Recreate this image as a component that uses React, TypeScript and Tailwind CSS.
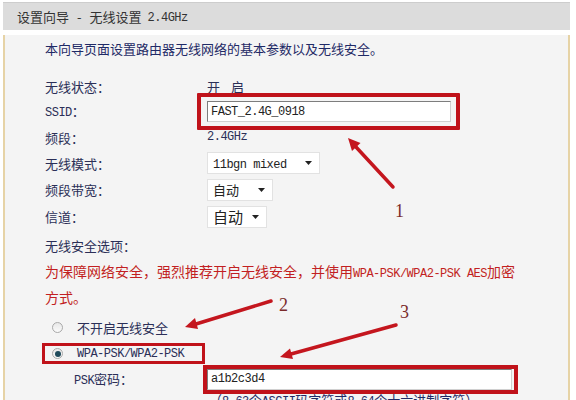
import React from 'react'

const M = ({ children }: { children: React.ReactNode }) => (
  <span className="font-['Liberation_Mono',monospace] text-[12px] tracking-[-0.5px]">{children}</span>
)

function Caret() {
  return (
    <svg width="7" height="4" viewBox="0 0 7 4" className="ml-auto">
      <path d="M0 0h7L3.5 4z" fill="#222" />
    </svg>
  )
}

function Select({ value, w, big }: { value: React.ReactNode; w: string; big?: boolean }) {
  return (
    <div className={`${w} h-[22px] flex items-center bg-white border border-[#e2e2e2] px-[5px] pr-[7px] ${big ? 'text-[15px]' : 'text-[13px]'} text-[#222]`}>
      <span>{value}</span>
      <Caret />
    </div>
  )
}

function Radio({ on }: { on?: boolean }) {
  return (
    <span className="w-[11px] h-[11px] rounded-full border border-[#a9a9a9] bg-gradient-to-b from-[#e8e8e8] to-[#fafafa] grid place-items-center">
      {on && <span className="w-[6px] h-[6px] rounded-full bg-[#1f4b5c]" />}
    </span>
  )
}

function Row({ h, label, children }: { h: string; label: React.ReactNode; children?: React.ReactNode }) {
  return (
    <div className={`${h} flex items-center`}>
      <div className="w-[162px] text-[13px] text-[#2b2f57]">{label}</div>
      <div className="flex items-center text-[13px] text-[#2b2f57]">{children}</div>
    </div>
  )
}

export default function App() {
  return (
    <div className="relative w-[576px] h-[400px] overflow-hidden bg-white pt-[2px] px-[3px] font-['Noto_Sans_CJK_SC','Noto_Sans',sans-serif] leading-none">
      <div className="h-[28px] bg-[#dcdcdc] border-t border-[#cdcdcd] flex items-center pl-[14px] text-[13px] text-[#333] w-[567px]">
        设置向导 <span className="mx-[8px]">-</span> 无线设置 <span className="ml-[6px]"><M>2.4GHz</M></span>
      </div>
      <div className="h-[372px] w-[567px] bg-[#f4f4f4] border-l-2 border-r-2 border-[#e6d3a6] pl-[40px]">
        <div className="mt-[5px] h-[26px] flex items-center text-[13px] text-[#1f2a66]">
          本向导页面设置路由器无线网络的基本参数以及无线安全。
        </div>
        <div className="h-[12px]" />

        <Row h="h-[26px]" label="无线状态：">
          <span className="tracking-[4px]">开 启</span>
        </Row>
        <Row h="h-[25px]" label={<><M>SSID</M>：</>}>
          <div className="relative">
            <div className="w-[244px] h-[21px] bg-white border border-[#7d7d7d] border-r-[#d0d0d0] border-b-[#d0d0d0] flex items-center px-[3px] text-[#222]">
              <M>FAST_2.4G_0918</M>
            </div>
            <div className="absolute -left-[10px] -right-[9px] -top-[8px] -bottom-[8px] border-4 border-[#c0121a] rounded-[1px]" />
          </div>
        </Row>
        <Row h="h-[26px]" label="频段：">
          <M>2.4GHz</M>
        </Row>
        <Row h="h-[26px]" label="无线模式：">
          <Select w="w-[113px]" value={<M>11bgn mixed</M>} />
        </Row>
        <Row h="h-[27px]" label="频段带宽：">
          <Select w="w-[66px]" value="自动" />
        </Row>
        <Row h="h-[27px]" label="信道：">
          <Select w="w-[60px]" value="自动" big />
        </Row>
        <div className="h-[30px] flex items-center text-[13px] text-[#2b2f57]">无线安全选项：</div>
        <div className="text-[14px] leading-[23px] text-[#c21f22]">
          为保障网络安全，强烈推荐开启无线安全，并使用<M>WPA-PSK/WPA2-PSK AES</M>加密
          <br />
          方式。
        </div>

        <div className="mt-[6px] h-[24px] flex items-center pl-[7px] gap-[14px] text-[13px] text-[#2b2f57]">
          <Radio />
          <span>不开启无线安全</span>
        </div>
        <div className="mt-[4px] -ml-[3px] w-[163px] h-[21px] border-[3px] border-[#c0121a] flex items-center pl-[7px] gap-[14px] text-[#2b2f57]">
          <Radio on />
          <M>WPA-PSK/WPA2-PSK</M>
        </div>
        <div className="h-[30px] flex items-center">
          <div className="w-[133px] ml-[29px] text-[13px] text-[#2b2f57]">
            <M>PSK</M>密码：
          </div>
          <div className="-ml-[4px] border-4 border-[#c0121a] pr-[2px]">
            <div className="w-[305px] h-[21px] bg-white border border-[#7d7d7d] border-r-[#d0d0d0] border-b-[#d0d0d0] flex items-center px-[3px] text-[#222]">
              <M>a1b2c3d4</M>
            </div>
          </div>
        </div>
        <div className="ml-[164px] -mt-[1px] text-[13px] text-[#1f2a66]">
          （<M>8-63</M>个<M>ASCII</M>码字符或<M>8-64</M>个十六进制字符）
        </div>
      </div>

      <svg className="absolute inset-0 pointer-events-none" width="576" height="400" viewBox="0 0 576 400">
        <g stroke="#c4161e" strokeWidth="3.5" strokeLinecap="round" fill="#c4161e">
          <line x1="393" y1="187" x2="356" y2="147" />
          <line x1="271" y1="301" x2="196" y2="324" />
          <line x1="396" y1="325" x2="291" y2="354" />
        </g>
        <g fill="#c4161e">
          <polygon points="348,138 360.5,143 352,151" />
          <polygon points="185,327 195,318 198,329" />
          <polygon points="280,357 290,348.5 293,359" />
        </g>
      </svg>
      <span className="absolute left-[395px] top-[202px] font-['Liberation_Serif',serif] text-[18px] leading-none text-[#7a2a2a]">1</span>
      <span className="absolute left-[279px] top-[296px] font-['Liberation_Serif',serif] text-[18px] leading-none text-[#7a2a2a]">2</span>
      <span className="absolute left-[400px] top-[303px] font-['Liberation_Serif',serif] text-[18px] leading-none text-[#7a2a2a]">3</span>
    </div>
  )
}
